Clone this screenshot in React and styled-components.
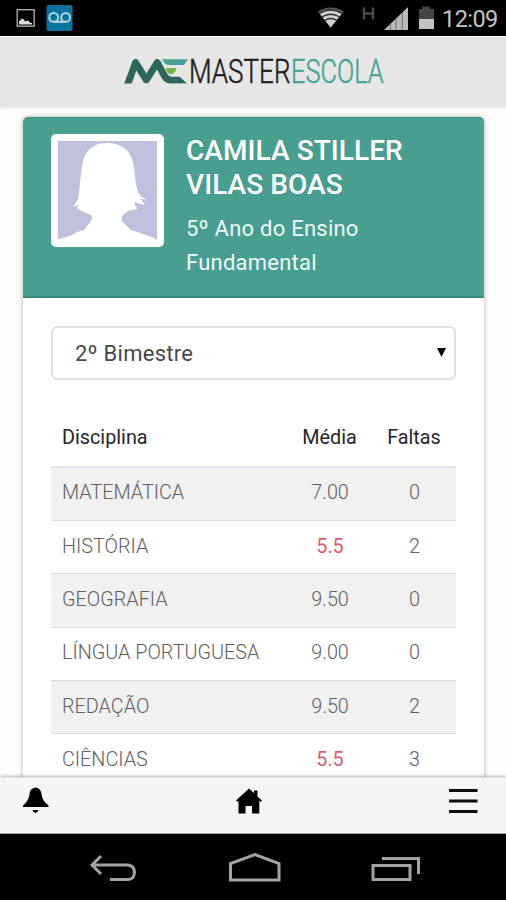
import React from "react";
import styled, { createGlobalStyle } from "styled-components";

const GlobalStyle = createGlobalStyle`
  * { box-sizing: border-box; }
  body { margin: 0; background: #fff; font-family: Roboto, "Open Sans", sans-serif; }
`;

const Phone = styled.div`
  width: 506px;
  height: 900px;
  display: flex;
  flex-direction: column;
  overflow: hidden;
  background: #fefefe;
`;

const StatusBar = styled.div`
  flex: 0 0 36px;
  min-height: 0;
  background: #000;
  display: flex;
  justify-content: space-between;
`;

const StatusIcons = styled.svg`
  display: block;
  width: ${(p) => p.$width}px;
  height: 36px;
`;

const StatusRight = styled.div`
  display: flex;
  padding-right: 8px;
`;

const Clock = styled.span`
  width: 56px;
  color: #c4c4c4;
  font-size: 23.5px;
  line-height: 38px;
  letter-spacing: -0.55px;
  white-space: nowrap;
`;

const Header = styled.header`
  flex: 0 0 71px;
  background: #e6e6e6;
  border-top: 1px solid #f8f8f8;
  box-shadow: 0 1px 3px rgba(0, 0, 0, 0.12);
  display: flex;
  align-items: flex-start;
  padding-left: 124px;
`;

const LogoMark = styled.svg`
  flex: none;
  display: block;
  width: 65px;
  height: 70px;
`;

const LogoText = styled.div`
  color: ${(p) => p.$color};
  width: ${(p) => p.$width}px;
  font-size: 33px;
  font-weight: 300;
  line-height: 40px;
  margin-top: 15px;
  white-space: nowrap;
  -webkit-text-stroke: 0.5px ${(p) => p.$color};
  transform: scaleX(${(p) => p.$scale});
  transform-origin: 0 0;
`;

const Content = styled.main`
  flex: 1;
  min-height: 0;
  overflow: hidden;
  padding: 10px 22px 0 23px;
`;

const Card = styled.section`
  height: 900px;
  background: #fff;
  border-radius: 5px 5px 0 0;
  box-shadow: 0 0 5px rgba(0, 0, 0, 0.32);
`;

const Profile = styled.div`
  height: 181px;
  padding: 16px 28px;
  display: flex;
  gap: 22px;
  background: #489e90;
  border-top: 1px solid #3c9183;
  border-bottom: 2px solid #388c7e;
  border-radius: 5px 5px 0 0;
`;

const Avatar = styled.svg`
  flex: none;
  display: block;
  width: 113px;
  height: 113px;
`;

const StudentInfo = styled.div`
  color: #fff;
  white-space: nowrap;
`;

const StudentName = styled.h1`
  margin: 0;
  font-size: 28px;
  font-weight: 500;
  line-height: 34px;
  letter-spacing: 0.07px;
`;

const StudentClass = styled.p`
  margin: 10px 0 0;
  font-size: 22px;
  line-height: 33.5px;
  letter-spacing: 0.24px;
  color: #effaf8;
`;

const Report = styled.div`
  padding: 28px 28px 0;
`;

const TermSelect = styled.div`
  height: 54px;
  padding: 0 8px 0 22px;
  display: flex;
  align-items: center;
  justify-content: space-between;
  border: 2px solid #dedfe0;
  border-radius: 6px;
  color: #484848;
  font-size: 22px;
  letter-spacing: 0.26px;
`;

const Arrow = styled.svg`
  width: 9px;
  height: 9px;
  margin-top: -2px;
`;

const Table = styled.table`
  width: 405px;
  margin-top: 29px;
  border-collapse: separate;
  border-spacing: 0;
  table-layout: fixed;
`;

const HeadCell = styled.th`
  width: ${(p) => p.$width}px;
  height: 58.5px;
  padding: ${(p) => (p.$left ? "0 0 0 11px" : "0")};
  border-bottom: 2px solid #dfe3ea;
  color: #262626;
  font-size: 19.8px;
  font-weight: 400;
  text-align: ${(p) => (p.$left ? "left" : "center")};
`;

const Row = styled.tr`
  height: 53.4px;
  &:nth-child(odd) { background: #f1f1f1; }
`;

const Cell = styled.td`
  padding: ${(p) => (p.$left ? "0 0 2px 11px" : "0 0 2px 1px")};
  border-bottom: 1px solid #dedede;
  color: ${(p) => (p.$low ? "#dd5c6c" : "#606060")};
  font-size: 19.8px;
  font-weight: ${(p) => (p.$low ? 400 : 300)};
  text-align: ${(p) => (p.$left ? "left" : "center")};
  white-space: nowrap;
`;

const TabBar = styled.nav`
  position: relative;
  flex: 0 0 57px;
  background: #f5f5f5;
  border-top: 1px solid #e3e3e3;
  border-bottom: 1px solid #aaa;
  box-shadow: 0 -1px 3px rgba(0, 0, 0, 0.28);
  display: flex;
  justify-content: space-between;
  padding: 8px 28px 0 22px;
`;

const TabIcon = styled.svg`
  display: block;
  width: 30px;
  height: 30px;
`;

const SystemBar = styled.div`
  flex: 0 0 66px;
  background: #000;
  display: flex;
  justify-content: space-between;
  padding: 16px 83px 0 87px;
`;

const SystemIcon = styled.svg`
  display: block;
  width: 54px;
  height: 36px;
  fill: none;
  stroke: #a3a3a3;
  stroke-width: 3;
`;

const grades = [
  ["MATEMÁTICA", "7.00", "0"],
  ["HISTÓRIA", "5.5", "2"],
  ["GEOGRAFIA", "9.50", "0"],
  ["LÍNGUA PORTUGUESA", "9.00", "0"],
  ["REDAÇÃO", "9.50", "2"],
  ["CIÊNCIAS", "5.5", "3"],
];

function NotificationIcons() {
  return (
    <StatusIcons $width={80} viewBox="0 0 80 36">
      <rect x="17.2" y="9.7" width="17" height="16.5" fill="none" stroke="#aaa" strokeWidth="1.4" />
      <path d="M19 24.5v-3l2-2 1-1 2 1 1 2 3-1 2 2 2 0.5v1.5z" fill="#ddd" />
      <rect x="46.5" y="5" width="26" height="26" rx="2" fill="#08739c" />
      <g fill="none" stroke="#b4d5df" strokeWidth="2">
        <circle cx="53.7" cy="17.4" r="4.4" />
        <circle cx="65.6" cy="17.4" r="4.4" />
        <path d="M53.7 21.9h11.9" />
      </g>
    </StatusIcons>
  );
}

function SignalIcons() {
  return (
    <StatusIcons $width={125} viewBox="317 0 125 36">
      <path d="M317.5 11.5Q330.7 3.5 344 11.5L330.7 27.5z" fill="#555" />
      <path d="M320 14Q330.7 7.5 341.5 14L330.7 27.5z" fill="#d0d0d0" />
      <g fill="none" stroke="#303030" strokeWidth="1.3">
        <path d="M319 13.4Q330.7 6.5 342.5 13.4" />
        <path d="M321.6 17Q330.7 11.5 340 17" />
        <path d="M324.5 20.5Q330.7 16.5 337 20.5" />
      </g>
      <path d="M364 7.5v12M373 7.5v12M364 13.5h9" stroke="#4a4a4a" strokeWidth="2.4" />
      <path d="M384 30L408 7v23z" fill="#b8b8b8" />
      <path d="M390.5 23.8v6.2M396 18.5v11.5M402.4 12.4v17.6" stroke="#777" strokeWidth="1.1" />
      <path d="M419 9h3V6.5h8V9h4v11h-15z" fill="#444" />
      <path d="M419 19h15v10h-15z" fill="#c2c2c2" />
    </StatusIcons>
  );
}

function BrandMark() {
  return (
    <LogoMark viewBox="124 37 65 70">
      <path d="M127 86L135.6 62.6L146.3 80L157.3 62.6L164.5 76Q166.800 80.3 171.500 80.3H190" fill="none" stroke="#2d665d" strokeWidth="7" strokeLinejoin="round" clipPath="url(#markClip)" />
      <clipPath id="markClip">
        <path d="M124 59H170L180 77L187 83.500H124z" />
      </clipPath>
      <path d="M162 59.300H188L184 65H170Q165.5 65 164 62.500z" fill="#46a294" />
      <path d="M165.5 68H176.5Q176 73.5 170.5 74.3Q167.5 74 165.5 68z" fill="#72b741" />
    </LogoMark>
  );
}

function StudentAvatar() {
  return (
    <Avatar viewBox="51 133 113 113">
      <rect x="51" y="133" width="113" height="113" rx="5" fill="#fff" />
      <rect x="58" y="140" width="99" height="99" fill="#bfc0dc" />
      <path d="M58 239V238Q70 236 77 231L84 229L91 220Q93 217 91.5 214Q82 211 77 207L79 204L73 206L78 198C81 181 80 170 84 157C88 146 97 142 107 142C119 142 129 148 132 158C136 171 134 182 139 193L147 200L140 197L145 204L134 201L137 208L128 210L122 215L122 220L131 229L137 231L152 236L157 239z" fill="#fff" />
    </Avatar>
  );
}

export default function App() {
  return (
    <>
      <GlobalStyle />
      <Phone>
        <StatusBar>
          <NotificationIcons />
          <StatusRight>
            <SignalIcons />
            <Clock>12:09</Clock>
          </StatusRight>
        </StatusBar>
        <Header>
          <BrandMark />
          <LogoText $color="#1c1c1c" $width={102} $scale={0.79}>MASTER</LogoText>
          <LogoText $color="#48a396" $width={94} $scale={0.77}>ESCOLA</LogoText>
        </Header>
        <Content>
          <Card>
            <Profile>
              <StudentAvatar />
              <StudentInfo>
                <StudentName>CAMILA STILLER<br />VILAS BOAS</StudentName>
                <StudentClass>5º Ano do Ensino<br />Fundamental</StudentClass>
              </StudentInfo>
            </Profile>
            <Report>
              <TermSelect>
                2º Bimestre
                <Arrow viewBox="0 0 9 9"><path d="M0 0h9L4.5 9z" /></Arrow>
              </TermSelect>
              <Table>
                <thead>
                  <tr>
                    <HeadCell $left $width={236}>Disciplina</HeadCell>
                    <HeadCell $width={85}>Média</HeadCell>
                    <HeadCell $width={84}>Faltas</HeadCell>
                  </tr>
                </thead>
                <tbody>
                  {grades.map(([subject, grade, absences]) => (
                    <Row key={subject}>
                      <Cell $left>{subject}</Cell>
                      <Cell $low={Number(grade) < 6}>{grade}</Cell>
                      <Cell>{absences}</Cell>
                    </Row>
                  ))}
                </tbody>
              </Table>
            </Report>
          </Card>
        </Content>
        <TabBar>
          <TabIcon viewBox="22 786 30 30">
            <path d="M23 807V805.5Q28.5 801 29.5 794.5Q30 788 35.5 787.5Q41 788 41.5 794.5Q42.5 801 48.5 805.5V807z" />
            <path d="M32.5 810h6Q37.5 813 35.5 813T32.5 810z" />
          </TabIcon>
          <TabIcon viewBox="235.5 786 30 30">
            <path d="M236.5 800.5L249.5 788.5L254.5 793V790.5H258V796.5L262.5 800.5L261 802L259.8 801V813.5H252.5V806H246V813.5H239V801L238 802z" />
          </TabIcon>
          <TabIcon viewBox="448 786 30 30">
            <path d="M449 790.5h28.5M449 801h28.5M449 811.5h28.5" stroke="#0c0c0c" strokeWidth="3" />
          </TabIcon>
        </TabBar>
        <SystemBar>
          <SystemIcon viewBox="87 850 54 36">
            <path d="M101 856L92 865L101 874M92 865H128Q134.5 866 134.5 872.5Q134 879.5 128 879.5H110" />
          </SystemIcon>
          <SystemIcon viewBox="227 850 54 36">
            <path d="M229.5 880V863.5L254 854.5L278 863.5V880z" />
          </SystemIcon>
          <SystemIcon viewBox="369 850 54 36">
            <path d="M373 865.5h37v14h-37zM382 858.5h36.5v15.5" />
          </SystemIcon>
        </SystemBar>
      </Phone>
    </>
  );
}
